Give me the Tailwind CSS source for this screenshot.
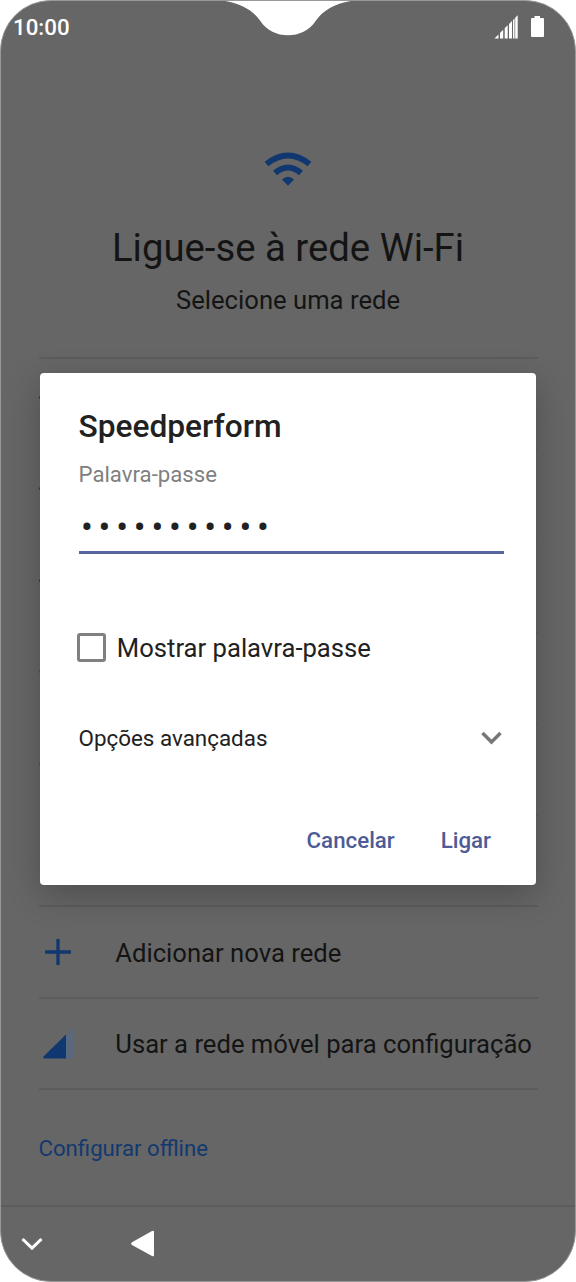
<!DOCTYPE html>
<html lang="pt">
<head>
<meta charset="utf-8">
<title>Ligue-se à rede Wi-Fi</title>
<script src="https://cdn.jsdelivr.net/npm/@tailwindcss/browser@4"></script>
</head>
<body class="bg-white">
<div class="relative flex h-[1282px] w-[576px] flex-col overflow-hidden rounded-[51px] border border-[#989898] bg-[#666666] font-['Roboto',sans-serif] whitespace-nowrap text-[#141414]">
  <svg class="absolute -top-px left-[217px] z-10" width="140" height="37" viewBox="218 0 140 37"><path d="M218 0C238 2 252 9 260 20.500C267 31 277 35.200 288 35.200S309 31 316 20.500C324 9 338 2 358 0Z" fill="#fff"/></svg>

  <header class="flex h-[53px] items-center justify-between pr-[31px] pl-[12px] text-white">
    <span class="text-[22.300px] leading-[53px] font-medium">10:00</span>
    <div class="flex items-end gap-[13px] pb-px">
      <svg width="24" height="24" viewBox="494 14 24 24" fill="#fff"><path d="M494.500 37.500l4-4v4zM500 32l3.200-3.200v8.700H500zM504.700 27.300l3-3v13.200h-3zM509 23l3-3v17.500h-3zM513 19l1.500-1.500v20H513zM515.200 16.800l2.500-2.500v23.200h-2.500z"/></svg>
      <svg class="mb-px" width="13" height="22" viewBox="0 0 13 22" fill="#fff"><path d="M3.500 0h5.500v2H12q1 0 1 1v17q0 1-1 1H1q-1 0-1-1V3q0-1 1-1h2.500z"/></svg>
    </div>
  </header>

  <section class="flex h-[303px] flex-col items-center pt-[97.500px]">
    <svg width="48" height="34" viewBox="264 151.500 48 34" fill="none" stroke="#10376f" stroke-width="6"><path d="M266.500 163.500Q288 146.500 309.500 163.500M275 172.500Q288 161.500 301 172.500"/><path d="M282 179Q288 173.500 294 179L288 185.200Z" fill="#10376f" stroke="none"/></svg>
    <h1 class="mt-[40.500px] text-[38.300px] leading-[44px]">Ligue-se à rede Wi-Fi</h1>
    <p class="mt-[15px] text-[25.650px] leading-[30px]">Selecione uma rede</p>
  </section>

  <ul class="mx-[37.500px] w-[499px] border-t-2 border-[#5c5c5c] text-[25.640px]">
    <li class="h-[91.400px] border-b border-[#5c5c5c] pt-[37px]"><i class="block size-[3px] rounded-full bg-[#10376f]"></i></li>
    <li class="h-[91.400px] border-b border-[#5c5c5c] pt-[37px]"><i class="block size-[3px] rounded-full bg-[#10376f]"></i></li>
    <li class="h-[91.400px] border-b border-[#5c5c5c] pt-[37px]"><i class="block size-[3px] rounded-full bg-[#10376f]"></i></li>
    <li class="h-[91.400px] border-b border-[#5c5c5c] pt-[37px]"><i class="block size-[3px] rounded-full bg-[#474b60]"></i></li>
    <li class="h-[91.400px] border-b border-[#5c5c5c] pt-[37px]"><i class="block size-[3px] rounded-full bg-[#474b60]"></i></li>
    <li class="h-[91.400px] border-b-2 border-[#5c5c5c]"></li>
    <li class="flex h-[91.400px] items-center border-b-2 border-[#5c5c5c] pl-[6px]">
      <svg class="mr-[44.800px]" width="26" height="26" viewBox="0 0 26 26" stroke="#10376f" stroke-width="3.300"><path d="M0 13h26M13 0v26"/></svg>
      <span class="pt-[2px]">Adicionar nova rede</span>
    </li>
    <li class="flex h-[91.400px] items-center border-b-2 border-[#5c5c5c] pl-[4.500px]">
      <svg class="mr-[40.300px]" width="32" height="31" viewBox="0 0 32 31"><path d="M1 29.500L29.500 1Q31 0 31 1.500V29q0 1.500-1.500 1.500H22V8.500z" fill="#59677f"/><path d="M.5 28.500L23 6.500v24H1.500Q-.5 30 .5 28.500z" fill="#10376f"/></svg>
      <span class="pt-px">Usar a rede móvel para configuração</span>
    </li>
  </ul>

  <a class="mt-[43px] ml-[37.500px] text-[22.200px] leading-[30px] text-[#12396f]">Configurar offline</a>

  <nav class="absolute inset-x-0 bottom-0 flex h-[76px] items-center border-t-2 border-[#5c5c5c] pl-[20px]">
    <svg width="22" height="14" viewBox="0 0 22 14" fill="none" stroke="#fff" stroke-width="3"><path d="M1.500 2L11 11.200L20.500 2"/></svg>
    <svg class="ml-[88px]" width="24" height="28" viewBox="0 0 24 28" fill="#fff"><path d="M1 12.300L21 1q2-1 2 1v23q0 2-2 1L1 15q-1.700-1.300 0-2.700z"/></svg>
  </nav>

  <div role="dialog" class="absolute top-[372.400px] left-[39px] flex h-[511.500px] w-[496px] flex-col rounded-[4px] bg-white pr-[32px] pl-[38.500px] text-[#212121] shadow-[0_10px_34px_rgba(0,0,0,0.24)]">
    <h2 class="mt-[35.200px] text-[31.700px] leading-[36px] font-medium">Speedperform</h2>
    <label class="mt-[14.300px] text-[22.200px] leading-[30px] text-[#808080]">Palavra-passe</label>
    <div class="mt-[19px] flex h-[46px] border-b-3 border-[#5765a0] pl-[2.500px]">
      <span class="text-[35px] leading-[40px] tracking-[5.800px]">•••••••••••</span>
    </div>
    <div class="-ml-[2px] mt-[78.500px] flex h-[30px] items-center gap-[11.300px]">
      <span class="size-[29px] rounded-[3px] border-3 border-[#808080]"></span>
      <span class="pt-px text-[25.640px]">Mostrar palavra-passe</span>
    </div>
    <div class="mt-[60.500px] flex h-[30px] items-center justify-between pr-[2px]">
      <span class="pt-[2px] text-[22.400px]">Opções avançadas</span>
      <svg width="21" height="14" viewBox="0 0 21 14" fill="none" stroke="#777" stroke-width="3.500"><path d="M1.500 2L10.500 11L19.500 2"/></svg>
    </div>
    <div class="mt-[73px] flex h-[30px] items-center justify-end gap-[46px] pr-[13px] text-[22.300px] font-medium text-[#4d5b96]">
      <span>Cancelar</span><span>Ligar</span>
    </div>
  </div>
</div>
</body>
</html>
